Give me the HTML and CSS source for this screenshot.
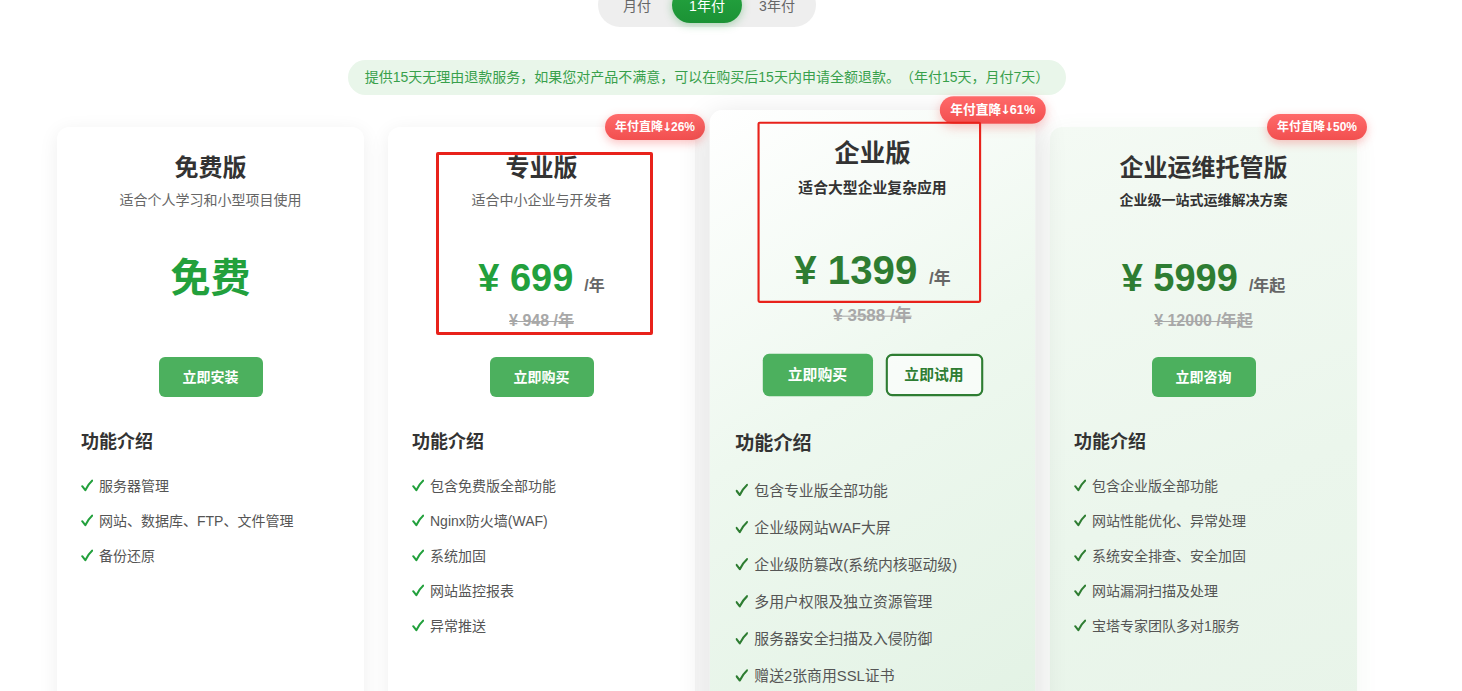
FILE: index.html
```html
<!DOCTYPE html>
<html lang="zh-CN">
<head>
    <meta charset="UTF-8">
    <meta name="viewport" content="width=device-width, initial-scale=1.0">
    <title>价格方案</title>
    <link rel="stylesheet" href="styles.css">
</head>
<body>
    <div class="page">
        <!-- 付费周期 -->
        <div class="cycle">
            <span class="cycle-item">月付</span>
            <span class="cycle-item active">1年付</span>
            <span class="cycle-item">3年付</span>
        </div>

        <div class="notice-row">
            <div class="notice">提供15天无理由退款服务，如果您对产品不满意，可以在购买后15天内申请全额退款。（年付15天，月付7天）</div>
        </div>

        <div class="plans">
            <!-- 免费版 -->
            <div class="plan">
                <h3 class="plan-name">免费版</h3>
                <p class="plan-desc">适合个人学习和小型项目使用</p>
                <div class="price"><span class="price-free">免费</span></div>
                <div class="price-old empty">&nbsp;</div>
                <div class="actions"><a class="btn">立即安装</a></div>
                <h4 class="feat-title">功能介绍</h4>
                <ul class="feat">
                    <li>服务器管理</li>
                    <li>网站、数据库、FTP、文件管理</li>
                    <li>备份还原</li>
                </ul>
            </div>

            <!-- 专业版 -->
            <div class="plan">
                <span class="badge">年付直降<i class="arrow">↓</i>26%</span>
                <h3 class="plan-name">专业版</h3>
                <p class="plan-desc">适合中小企业与开发者</p>
                <div class="price"><span class="price-num">¥ 699</span><span class="price-unit">/年</span></div>
                <div class="price-old">¥ 948 /年</div>
                <div class="actions"><a class="btn">立即购买</a></div>
                <h4 class="feat-title">功能介绍</h4>
                <ul class="feat">
                    <li>包含免费版全部功能</li>
                    <li>Nginx防火墙(WAF)</li>
                    <li>系统加固</li>
                    <li>网站监控报表</li>
                    <li>异常推送</li>
                </ul>
                <div class="mark mark-pro"></div>
            </div>

            <!-- 企业版 -->
            <div class="plan plan-hot">
                <span class="badge">年付直降<i class="arrow">↓</i>61%</span>
                <h3 class="plan-name">企业版</h3>
                <p class="plan-desc">适合大型企业复杂应用</p>
                <div class="price"><span class="price-num">¥ 1399</span><span class="price-unit">/年</span></div>
                <div class="price-old">¥ 3588 /年</div>
                <div class="actions">
                    <a class="btn">立即购买</a>
                    <a class="btn btn-line">立即试用</a>
                </div>
                <h4 class="feat-title">功能介绍</h4>
                <ul class="feat">
                    <li>包含专业版全部功能</li>
                    <li>企业级网站WAF大屏</li>
                    <li>企业级防篡改(系统内核驱动级)</li>
                    <li>多用户权限及独立资源管理</li>
                    <li>服务器安全扫描及入侵防御</li>
                    <li>赠送2张商用SSL证书</li>
                </ul>
                <div class="mark mark-ent"></div>
            </div>

            <!-- 企业运维托管版 -->
            <div class="plan plan-ops">
                <span class="badge">年付直降<i class="arrow">↓</i>50%</span>
                <h3 class="plan-name">企业运维托管版</h3>
                <p class="plan-desc">企业级一站式运维解决方案</p>
                <div class="price"><span class="price-num">¥ 5999</span><span class="price-unit">/年起</span></div>
                <div class="price-old">¥ 12000 /年起</div>
                <div class="actions"><a class="btn">立即咨询</a></div>
                <h4 class="feat-title">功能介绍</h4>
                <ul class="feat">
                    <li>包含企业版全部功能</li>
                    <li>网站性能优化、异常处理</li>
                    <li>系统安全排查、安全加固</li>
                    <li>网站漏洞扫描及处理</li>
                    <li>宝塔专家团队多对1服务</li>
                </ul>
            </div>
        </div>
    </div>
</body>
</html>
```

FILE: styles.css
```css
html, body {
    margin: 0;
    padding: 0;
    background: #fff;
}
body {
    font-family: "Liberation Sans", "Noto Sans CJK SC", sans-serif;
    color: #333;
    overflow: hidden;
    text-spacing-trim: space-all;
}
.page {
    width: 1300px;
    margin-left: 57px;
}

/* 付费周期切换 */
.cycle {
    display: flex;
    width: max-content;
    margin: -17px auto 0;
    padding: 4px;
    background: #eeeeee;
    border-radius: 22px;
}
.cycle-item {
    width: 70px;
    height: 36px;
    line-height: 38px;
    text-align: center;
    font-size: 14px;
    color: #666;
    border-radius: 18px;
}
.cycle-item.active {
    background: linear-gradient(180deg, #25a540, #1b9235);
    color: #fff;
    box-shadow: 0 2px 8px rgba(31, 155, 57, .35);
}

/* 退款提示 */
.notice-row {
    margin-top: 33px;
    text-align: center;
}
.notice {
    display: inline-block;
    height: 35px;
    line-height: 35px;
    padding: 0 17px;
    border-radius: 18px;
    background: #e9f6ea;
    color: #38a04b;
    font-size: 14px;
}

/* 套餐卡片 */
.plans {
    display: flex;
    gap: 24px;
    margin-top: 32px;
}
.plan {
    position: relative;
    width: 307px;
    flex: none;
    box-sizing: border-box;
    padding: 24px 24px 40px;
    background: #fff;
    border-radius: 12px;
    box-shadow: 0 4px 20px rgba(0, 0, 0, .07);
    text-align: center;
}
.plan-hot {
    z-index: 1;
    transform-origin: center top;
    transform: translateY(-17px) scale(1.06);
    background: linear-gradient(150deg, #ffffff 0%, #eef8ef 45%, #e2f2e4 100%);
    box-shadow: 0 8px 30px rgba(0, 0, 0, .14);
}
.plan-ops {
    background: linear-gradient(160deg, #f4faf4 0%, #ebf6ec 60%, #e8f4e9 100%);
    box-shadow: 0 4px 24px rgba(60, 140, 70, .06);
}
.plan-name {
    margin: 0;
    font-size: 24px;
    line-height: 34px;
    font-weight: bold;
    color: #333;
}
.plan-desc {
    margin: 5px 0 0;
    font-size: 14px;
    line-height: 20px;
    color: #666;
}
.plan-hot .plan-desc, .plan-ops .plan-desc {
    color: #333;
    font-weight: bold;
}

.price {
    margin-top: 43px;
    line-height: 50px;
    height: 50px;
    white-space: nowrap;
}
.price-num {
    font-size: 38px;
    font-weight: bold;
    color: #22a03c;
}
.price-free {
    font-size: 40px;
    font-weight: bold;
    color: #22a03c;
}
.plan-hot .price-num, .plan-ops .price-num {
    color: #2e7d32;
}
.price-unit {
    margin-left: 11px;
    font-size: 16px;
    line-height: 1;
    font-weight: bold;
    color: #666;
}
.price-old {
    margin-top: 6px;
    line-height: 24px;
    font-size: 16px;
    font-weight: bold;
    color: #a8a8a8;
    text-decoration: line-through;
}
.price-old.empty {
    visibility: hidden;
}

.actions {
    display: flex;
    justify-content: center;
    gap: 12px;
    margin-top: 24px;
}
.btn {
    display: block;
    height: 40px;
    line-height: 40px;
    padding: 0 24px;
    border-radius: 6px;
    background: #4cb05e;
    color: #fff;
    font-size: 14px;
    font-weight: bold;
    cursor: pointer;
}
.btn-line {
    box-sizing: border-box;
    padding: 0 16px;
    line-height: 36px;
    background: rgba(255, 255, 255, .6);
    border: 2px solid #2e7d32;
    color: #2e7d32;
}

.feat-title {
    margin: 32px 0 0;
    font-size: 18px;
    line-height: 26px;
    font-weight: bold;
    color: #333;
    text-align: left;
}
.feat {
    margin: 14px 0 0;
    padding: 0;
    list-style: none;
    text-align: left;
}
.feat li {
    line-height: 35px;
    font-size: 14px;
    color: #555;
}
.feat li::before {
    content: "";
    display: inline-block;
    width: 12px;
    height: 13px;
    margin: 0 6px 0 0;
    vertical-align: -1px;
    background: #22a03c;
    -webkit-mask: url("data:image/svg+xml,%3Csvg xmlns='http://www.w3.org/2000/svg' viewBox='0 0 12 13'%3E%3Cpath d='M1.2 7.2 L4.3 11.2 Q7 5.5 11.3 1.6' fill='none' stroke='black' stroke-width='2' stroke-linecap='round' stroke-linejoin='round'/%3E%3C/svg%3E") no-repeat center / contain;
    mask: url("data:image/svg+xml,%3Csvg xmlns='http://www.w3.org/2000/svg' viewBox='0 0 12 13'%3E%3Cpath d='M1.2 7.2 L4.3 11.2 Q7 5.5 11.3 1.6' fill='none' stroke='black' stroke-width='2' stroke-linecap='round' stroke-linejoin='round'/%3E%3C/svg%3E") no-repeat center / contain;
}
.plan-hot .feat li::before, .plan-ops .feat li::before {
    background: #2e7d32;
}

/* 角标 */
.badge {
    position: absolute;
    top: -13px;
    right: -10px;
    height: 26px;
    line-height: 26px;
    padding: 0 10px;
    border-radius: 13px;
    background: linear-gradient(180deg, #ff6a6a, #f24f4f);
    color: #fff;
    font-size: 12px;
    font-weight: bold;
    box-shadow: 0 3px 10px rgba(245, 80, 80, .35);
    white-space: nowrap;
}
.badge .arrow {
    margin: 0 -1px;
    font-style: normal;
    font-family: "DejaVu Sans", sans-serif;
    font-weight: bold;
    font-size: 12px;
}

/* 截图上的标注框 */
.mark {
    position: absolute;
    box-sizing: border-box;
    border: 3px solid #e8221b;
    border-radius: 2px;
    pointer-events: none;
}
.mark-pro {
    left: 48px;
    top: 25px;
    width: 217px;
    height: 183px;
}
.mark-ent {
    left: 45px;
    top: 11px;
    width: 211px;
    height: 171px;
    border-width: 2.5px;
}
```
